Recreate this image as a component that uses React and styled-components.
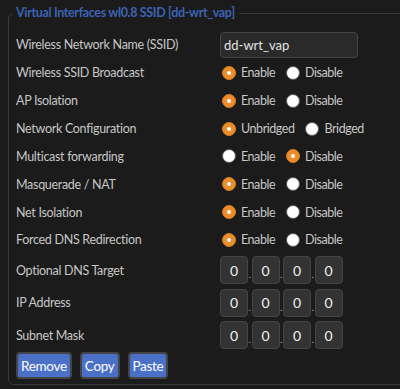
import React from "react";
import styled, { createGlobalStyle } from "styled-components";

const Global = createGlobalStyle`
  html, body {
    margin: 0;
    background: #1b1b1b;
    overflow: hidden;
  }
  body {
    font-family: Lato, "Liberation Sans", sans-serif;
  }
`;

const Panel = styled.fieldset`
  width: 420px;
  margin: 4px 0 0 8px;
  padding: 8px 7px 5px;
  border: 1px solid #3a3a3a;
  border-radius: 6px;
  box-sizing: border-box;
`;

const Legend = styled.legend`
  margin-left: -4px;
  padding: 0 4px;
  color: #3c62b4;
  font-size: 12.5px;
  font-weight: bold;
  letter-spacing: -0.35px;
  line-height: 18px;
`;

const Row = styled.div`
  display: grid;
  grid-template-columns: 204px 1fr;
  align-items: center;
  height: ${(p) => p.h || 27.85}px;
`;

const Label = styled.span`
  color: #c6c6c6;
  font-size: 12.5px;
  letter-spacing: -0.3px;
`;

const TextInput = styled.input`
  width: 138px;
  height: 26px;
  box-sizing: border-box;
  padding: 0 3px;
  background: #2a2a2a;
  border: 1px solid #454545;
  border-radius: 4px;
  color: #e2e2e2;
  font-family: inherit;
  font-size: 13px;
  outline: none;
`;

const Choices = styled.div`
  display: flex;
  align-items: center;
`;

const Choice = styled.label`
  display: flex;
  align-items: center;
  gap: 5px;
  margin-right: 9px;
  color: #c6c6c6;
  font-size: 12.5px;
  letter-spacing: -0.45px;
`;

const Dot = styled.span`
  width: 14px;
  height: 14px;
  border-radius: 50%;
  box-sizing: border-box;
  margin-left: 2px;
  background: ${(p) => (p.on ? "#ec8d2c" : "#ffffff")};
  border: 1px solid ${(p) => (p.on ? "#d77c22" : "#555")};
  display: flex;
  align-items: center;
  justify-content: center;
  &::after {
    content: "";
    width: 4px;
    height: 4px;
    border-radius: 50%;
    background: #fff;
    display: ${(p) => (p.on ? "block" : "none")};
  }
`;

const Octets = styled.div`
  display: flex;
  align-items: center;
`;

const Octet = styled.span`
  width: 28px;
  height: 28px;
  box-sizing: border-box;
  display: flex;
  align-items: center;
  justify-content: center;
  background: #333;
  border: 1px solid #454545;
  border-radius: 4px;
  color: #f0f0f0;
  font-size: 14px;
`;

const Sep = styled.span`
  width: 3.5px;
  color: #aaa;
  font-size: 10px;
  align-self: flex-end;
  margin-bottom: 4px;
  text-align: center;
`;

const Buttons = styled.div`
  display: flex;
  gap: 8px;
  padding-top: 1px;
`;

const Button = styled.button`
  height: 27px;
  padding: 0 3px;
  background: #4a70c8;
  border: 2px solid #444;
  border-radius: 4px;
  color: #fff;
  font-family: inherit;
  font-size: 13.5px;
  letter-spacing: -0.3px;
`;

const radios = [
  ["Wireless SSID Broadcast", ["Enable", "Disable"], 0],
  ["AP Isolation", ["Enable", "Disable"], 0],
  ["Network Configuration", ["Unbridged", "Bridged"], 0],
  ["Multicast forwarding", ["Enable", "Disable"], 1],
  ["Masquerade / NAT", ["Enable", "Disable"], 0],
  ["Net Isolation", ["Enable", "Disable"], 0],
  ["Forced DNS Redirection", ["Enable", "Disable"], 0],
];

const ips = ["Optional DNS Target", "IP Address", "Subnet Mask"];

const Ip = () => (
  <Octets>
    {[0, 1, 2, 3].map((i) => (
      <React.Fragment key={i}>
        {i > 0 && <Sep>.</Sep>}
        <Octet>0</Octet>
      </React.Fragment>
    ))}
  </Octets>
);

export default function App() {
  return (
    <>
      <Global />
      <Panel>
        <Legend>Virtual Interfaces wl0.8 SSID [dd-wrt_vap]</Legend>
        <Row h={29}>
          <Label>Wireless Network Name (SSID)</Label>
          <TextInput defaultValue="dd-wrt_vap" />
        </Row>
        {radios.map(([label, opts, sel]) => (
          <Row key={label}>
            <Label>{label}</Label>
            <Choices>
              {opts.map((o, i) => (
                <Choice key={o}>
                  <Dot on={i === sel} />
                  {o}
                </Choice>
              ))}
            </Choices>
          </Row>
        ))}
        {ips.map((label) => (
          <Row key={label} h={32.5}>
            <Label>{label}</Label>
            <Ip />
          </Row>
        ))}
        <Buttons>
          <Button>Remove</Button>
          <Button>Copy</Button>
          <Button>Paste</Button>
        </Buttons>
      </Panel>
    </>
  );
}
